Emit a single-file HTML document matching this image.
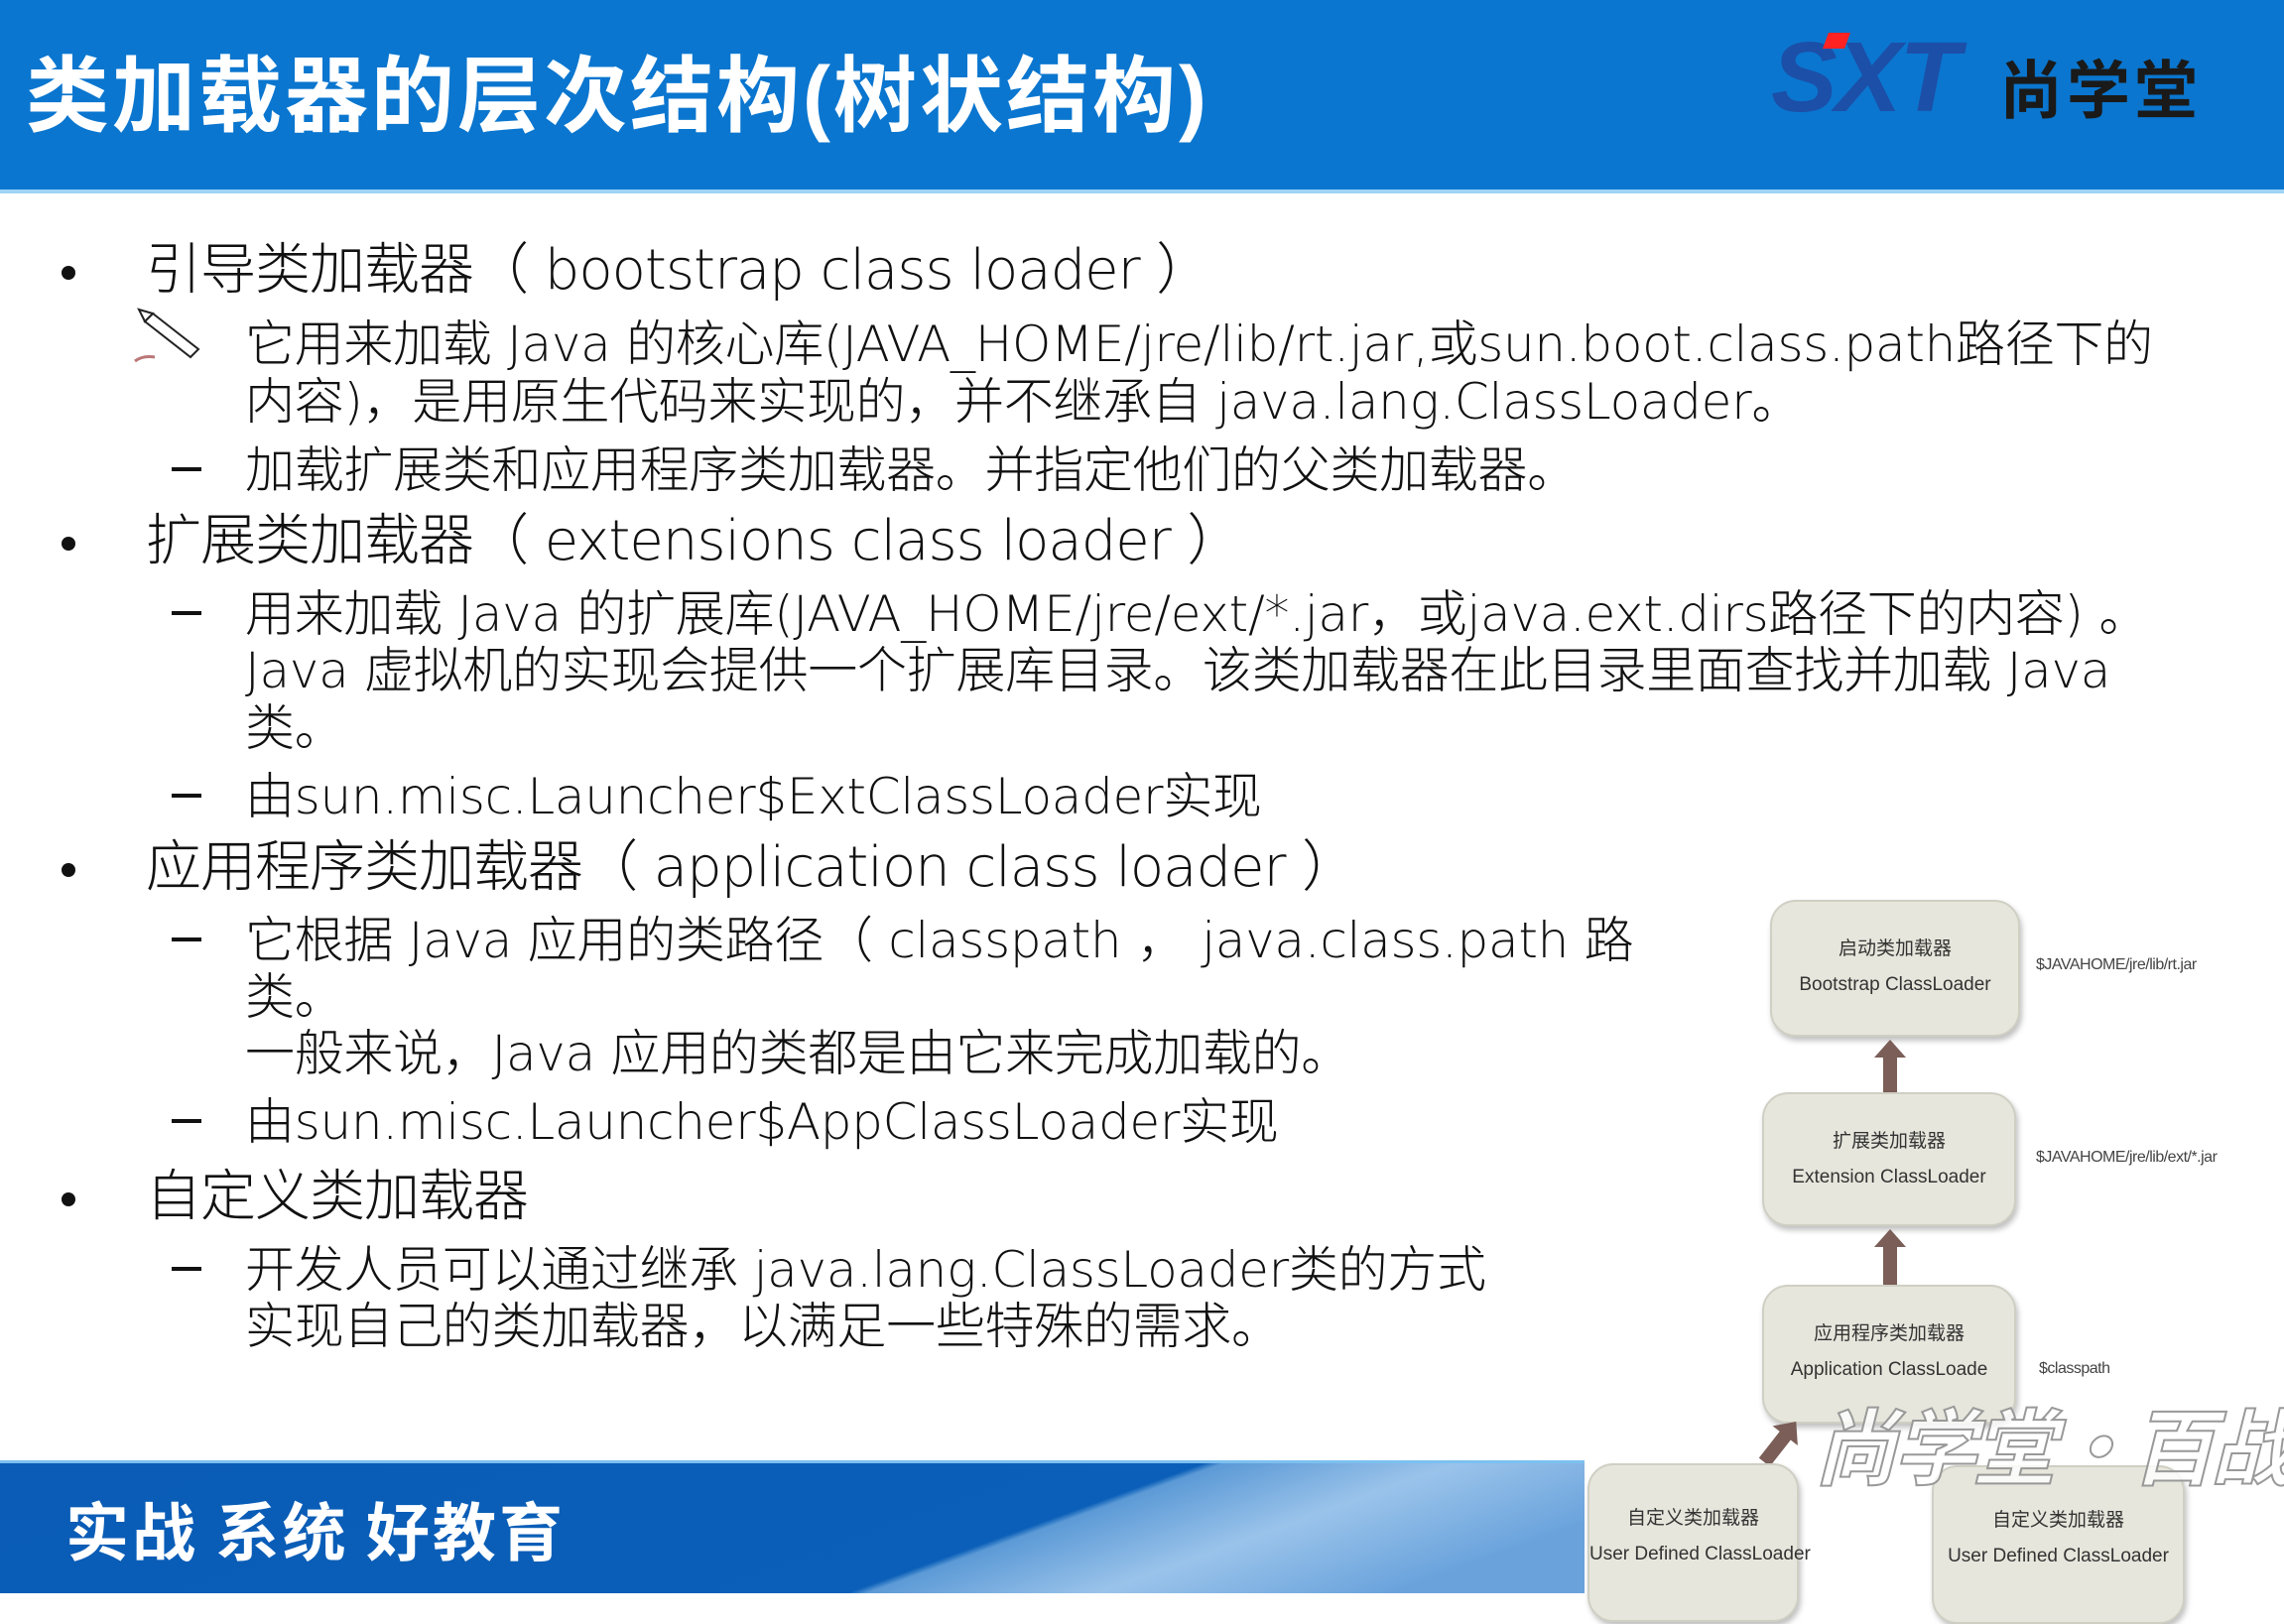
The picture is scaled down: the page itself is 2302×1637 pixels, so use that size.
<!DOCTYPE html>
<html><head><meta charset="utf-8"><style>
*{margin:0;padding:0;box-sizing:border-box}
body{width:2302px;height:1606px;overflow:hidden;background:#fff;position:relative;font-family:"DejaVu Sans","Noto Sans CJK SC",sans-serif;color:#111}
.hdr{position:absolute;left:0;top:0;width:2302px;height:195px;background:#0a76cf;border-bottom:4px solid #9fd4f5}
.title{position:absolute;left:26px;top:50px;font-size:84px;line-height:94px;color:#fff;font-weight:bold;white-space:nowrap;letter-spacing:3px;font-family:"Liberation Sans","Noto Sans CJK SC",sans-serif}
.l{position:absolute;white-space:nowrap;line-height:1;font-weight:300}
.b{font-size:56px;left:147px;letter-spacing:-1px}
.s{font-size:50px;left:247px;letter-spacing:-0.3px}
.dot{position:absolute;left:62px;width:14px;height:14px;border-radius:50%;background:#111}
.dash{position:absolute;left:173px;width:30px;height:4px;background:#111}
.box{position:absolute;background:#e6e6dc;border:2px solid #cfcfc4;border-radius:26px;box-shadow:2px 4px 6px rgba(0,0,0,.25);text-align:center;color:#333;font-size:19px;line-height:36px;white-space:nowrap;font-family:"Liberation Sans","Noto Sans CJK SC",sans-serif}
.arr{position:absolute;width:14px;background:#7a5e57}
.arr::before{content:"";position:absolute;left:-9px;top:-14px;border-left:16px solid transparent;border-right:16px solid transparent;border-bottom:18px solid #7a5e57}
.lab{position:absolute;font-size:16px;color:#444;white-space:nowrap;font-family:"Liberation Sans",sans-serif;letter-spacing:-0.5px}
</style></head><body>
<div class="hdr"></div>
<div class="title">类加载器的层次结构(树状结构)</div>
<div style="position:absolute;left:1785px;top:28px;font-size:100px;font-weight:bold;font-style:italic;color:#1c4fa8;letter-spacing:-2px;line-height:100px;font-family:'Liberation Sans',sans-serif">SXT</div>
<div style="position:absolute;left:1840px;top:33px;width:22px;height:16px;background:#f22;transform:skewX(-20deg)"></div>
<div style="position:absolute;left:2015px;top:52px;font-size:64px;font-weight:bold;color:#1a1a1a;line-height:70px;letter-spacing:4px;font-family:'Noto Sans CJK SC',sans-serif">尚学堂</div>

<div class="dot" style="top:268px"></div>
<div class="l b" style="top:245px">引导类加载器（ bootstrap class loader ）</div>
<svg style="position:absolute;left:130px;top:310px" width="80" height="60" viewBox="0 0 80 60"><path d="M24 6 L70 42 L62 50 L16 14 Z" fill="#fff" stroke="#222" stroke-width="2"/><path d="M24 6 L16 14 L10 2 Z" fill="#fff" stroke="#222" stroke-width="2"/><path d="M6 54 Q14 48 26 50" stroke="#b77" stroke-width="3" fill="none"/></svg>
<div class="l s" style="top:322px">它用来加载 Java 的核心库(JAVA_HOME/jre/lib/rt.jar,或sun.boot.class.path路径下的</div>
<div class="l s" style="top:380px">内容)，是用原生代码来实现的，并不继承自 java.lang.ClassLoader。</div>
<div class="dash" style="top:471px"></div>
<div class="l s" style="top:449px">加载扩展类和应用程序类加载器。并指定他们的父类加载器。</div>
<div class="dot" style="top:541px"></div>
<div class="l b" style="top:518px">扩展类加载器（ extensions class loader ）</div>
<div class="dash" style="top:616px"></div>
<div class="l s" style="top:594px">用来加载 Java 的扩展库(JAVA_HOME/jre/ext/*.jar，或java.ext.dirs路径下的内容) 。</div>
<div class="l s" style="top:651px">Java 虚拟机的实现会提供一个扩展库目录。该类加载器在此目录里面查找并加载 Java</div>
<div class="l s" style="top:709px">类。</div>
<div class="dash" style="top:800px"></div>
<div class="l s" style="top:778px">由sun.misc.Launcher$ExtClassLoader实现</div>
<div class="dot" style="top:870px"></div>
<div class="l b" style="top:847px">应用程序类加载器（ application class loader ）</div>
<div class="dash" style="top:945px"></div>
<div class="l s" style="top:923px">它根据 Java 应用的类路径（ classpath ， java.class.path 路</div>
<div class="l s" style="top:980px">类。</div>
<div class="l s" style="top:1037px">一般来说，Java 应用的类都是由它来完成加载的。</div>
<div class="dash" style="top:1128px"></div>
<div class="l s" style="top:1106px">由sun.misc.Launcher$AppClassLoader实现</div>
<div class="dot" style="top:1202px"></div>
<div class="l b" style="top:1179px">自定义类加载器</div>
<div class="dash" style="top:1277px"></div>
<div class="l s" style="top:1255px">开发人员可以通过继承 java.lang.ClassLoader类的方式</div>
<div class="l s" style="top:1312px">实现自己的类加载器，以满足一些特殊的需求。</div>

<div style="position:absolute;left:0;top:1472px;width:1597px;height:134px;background:linear-gradient(160deg,#0a5cb6 0%,#0b5fb8 62%,#5c9ad6 63%,#9ac3ea 75%,#6aa3dc 90%);border-top:3px solid #7cc0f0"></div>
<div style="position:absolute;left:66px;top:1506px;font-size:64px;font-weight:bold;color:#fff;line-height:70px;white-space:nowrap;letter-spacing:3px;font-family:'Noto Sans CJK SC',sans-serif">实战 系统 好教育</div>

<div class="box" style="left:1784px;top:907px;width:252px;height:138px;padding-top:30px">启动类加载器<br>Bootstrap ClassLoader</div>
<div class="arr" style="left:1898px;top:1062px;height:39px"></div>
<div class="box" style="left:1776px;top:1101px;width:256px;height:135px;padding-top:30px">扩展类加载器<br>Extension ClassLoader</div>
<div class="arr" style="left:1898px;top:1253px;height:42px"></div>
<div class="box" style="left:1776px;top:1295px;width:256px;height:140px;padding-top:30px">应用程序类加载器<br>Application ClassLoade</div>
<div class="arr" style="left:1783px;top:1440px;height:38px;transform:rotate(38deg)"></div>
<div class="box" style="left:1600px;top:1475px;width:213px;height:160px;padding-top:36px">自定义类加载器<br>User Defined ClassLoader</div>
<div class="box" style="left:1947px;top:1477px;width:255px;height:160px;padding-top:36px">自定义类加载器<br>User Defined ClassLoader</div>
<div class="lab" style="left:2052px;top:964px">$JAVAHOME/jre/lib/rt.jar</div>
<div class="lab" style="left:2052px;top:1158px">$JAVAHOME/jre/lib/ext/*.jar</div>
<div class="lab" style="left:2055px;top:1371px">$classpath</div>
<div style="position:absolute;left:1828px;top:1400px;font-size:84px;font-weight:bold;font-style:italic;color:rgba(255,255,255,.8);-webkit-text-stroke:2px #999;white-space:nowrap;line-height:110px;letter-spacing:-4px;font-family:'Noto Sans CJK SC',sans-serif">尚学堂·百战</div>
</body></html>
